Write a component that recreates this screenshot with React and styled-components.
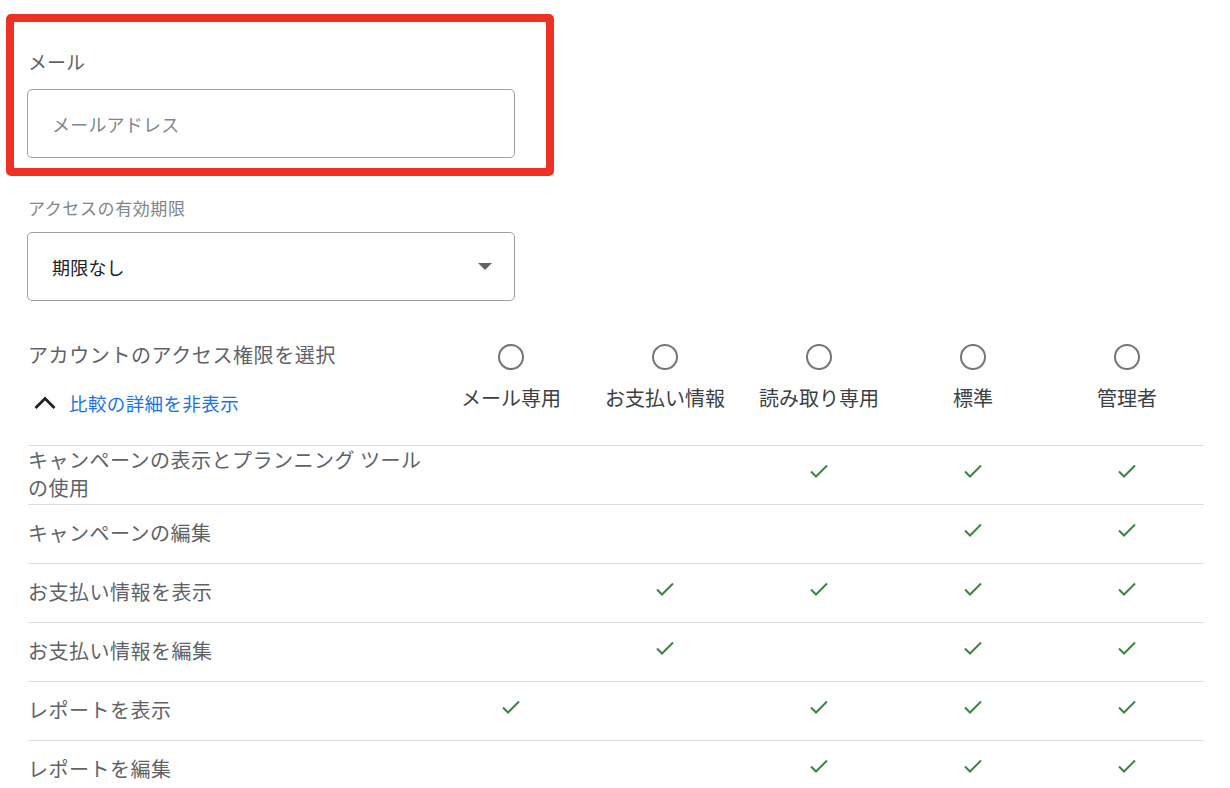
import React from "react";
import styled, { createGlobalStyle } from "styled-components";

const GlobalStyle = createGlobalStyle`
  html, body { margin: 0; padding: 0; background: #ffffff; overflow: hidden; }
  body { font-family: "Noto Sans CJK JP", "Noto Sans", sans-serif; color: #3c4043; }
`;

const Page = styled.div`
  padding: 14px 0 0 6px;
  width: 1198px;
`;

const Highlight = styled.section`
  width: 518px;
  border: 8px solid #ee3124;
  border-radius: 5px;
  padding: 26px 0 10px 14px;
  box-sizing: content-box;
`;

const Field = styled.div`
  padding-left: ${(p) => p.$indent || 0}px;
`;

const Label = styled.div`
  font-size: ${(p) => p.$size || 19}px;
  letter-spacing: ${(p) => p.$spacing || 0}px;
  line-height: 28px;
  color: ${(p) => p.$color || "#5f6368"};
  margin-bottom: ${(p) => p.$gap || 13}px;
`;

const Box = styled.div`
  width: 488px;
  height: 69px;
  box-sizing: border-box;
  border: 1px solid #9aa0a6;
  border-radius: 5px;
  display: flex;
  align-items: center;
  justify-content: space-between;
  padding: 0 22px 0 24px;
  margin-left: -1px;
  font-size: 18px;
  letter-spacing: 0.2px;
  color: ${(p) => (p.$placeholder ? "#80868b" : "#202124")};
`;

const Caret = styled.span`
  width: 0;
  height: 0;
  border-left: 7px solid transparent;
  border-right: 7px solid transparent;
  border-top: 7px solid #5f6368;
`;

const Expiry = styled.div`
  padding: 18px 0 0 22px;
`;

const Table = styled.div`
  margin-left: 22px;
  width: 1176px;
  display: grid;
  grid-template-columns: 406px repeat(5, 154px);
`;

const HeadLeft = styled.div`
  display: flex;
  flex-direction: column;
  height: 144px;
  box-sizing: border-box;
  padding-top: 40px;
`;

const Title = styled.div`
  font-size: 20px;
  letter-spacing: 0.6px;
  line-height: 28px;
  color: #5f6368;
`;

const Toggle = styled.div`
  display: flex;
  align-items: center;
  margin-top: 20px;
  gap: 12px;
  padding-left: 5px;
  font-size: 18.5px;
  letter-spacing: 0.4px;
  line-height: 28px;
  color: #1a73e8;
`;

const HeadCell = styled.div`
  display: flex;
  flex-direction: column;
  align-items: center;
  padding-top: 43px;
  height: 144px;
  box-sizing: border-box;
`;

const Radio = styled.span`
  width: 26px;
  height: 26px;
  box-sizing: border-box;
  border: 2.5px solid #757575;
  border-radius: 50%;
`;

const ColLabel = styled.div`
  margin-top: 14px;
  font-size: 20px;
  line-height: 28px;
  color: #3c4043;
  white-space: nowrap;
`;

const RowLabel = styled.div`
  border-top: 1px solid #dadce0;
  min-height: 59px;
  box-sizing: border-box;
  display: flex;
  align-items: center;
  font-size: 20px;
  letter-spacing: 0.5px;
  line-height: 28px;
  color: #5f6368;
  padding-bottom: 2px;
`;

const Cell = styled.div`
  border-top: 1px solid #dadce0;
  min-height: 59px;
  display: flex;
  align-items: center;
  justify-content: center;
  padding-bottom: 9px;
  box-sizing: border-box;
`;

const Check = () => (
  <svg width="20" height="16" viewBox="0 0 20 16">
    <path d="M2 8.5 L7 13.5 L18 2.5" fill="none" stroke="#3a8442" strokeWidth="2" />
  </svg>
);

const ChevronUp = () => (
  <svg width="24" height="16" viewBox="0 0 24 16">
    <path d="M2.5 13 L12 3.5 L21.5 13" fill="none" stroke="#202124" strokeWidth="2.8" />
  </svg>
);

const columns = ["メール専用", "お支払い情報", "読み取り専用", "標準", "管理者"];

const rows = [
  { label: "キャンペーンの表示とプランニング ツールの使用", checks: [0, 0, 1, 1, 1] },
  { label: "キャンペーンの編集", checks: [0, 0, 0, 1, 1] },
  { label: "お支払い情報を表示", checks: [0, 1, 1, 1, 1] },
  { label: "お支払い情報を編集", checks: [0, 1, 0, 1, 1] },
  { label: "レポートを表示", checks: [1, 0, 1, 1, 1] },
  { label: "レポートを編集", checks: [0, 0, 1, 1, 1] },
];

export default function App() {
  return (
    <>
      <GlobalStyle />
      <Page>
        <Highlight>
          <Field>
            <Label>メール</Label>
            <Box $placeholder>メールアドレス</Box>
          </Field>
        </Highlight>
        <Expiry>
          <Label $size={17} $spacing={0.6} $color="#80868b" $gap={10}>アクセスの有効期限</Label>
          <Box>
            期限なし
            <Caret />
          </Box>
        </Expiry>
        <Table>
          <HeadLeft>
            <Title>アカウントのアクセス権限を選択</Title>
            <Toggle>
              <ChevronUp />
              比較の詳細を非表示
            </Toggle>
          </HeadLeft>
          {columns.map((c) => (
            <HeadCell key={c}>
              <Radio />
              <ColLabel>{c}</ColLabel>
            </HeadCell>
          ))}
          {rows.map((r) => (
            <React.Fragment key={r.label}>
              <RowLabel>{r.label}</RowLabel>
              {r.checks.map((v, i) => (
                <Cell key={i}>{v ? <Check /> : null}</Cell>
              ))}
            </React.Fragment>
          ))}
        </Table>
      </Page>
    </>
  );
}
